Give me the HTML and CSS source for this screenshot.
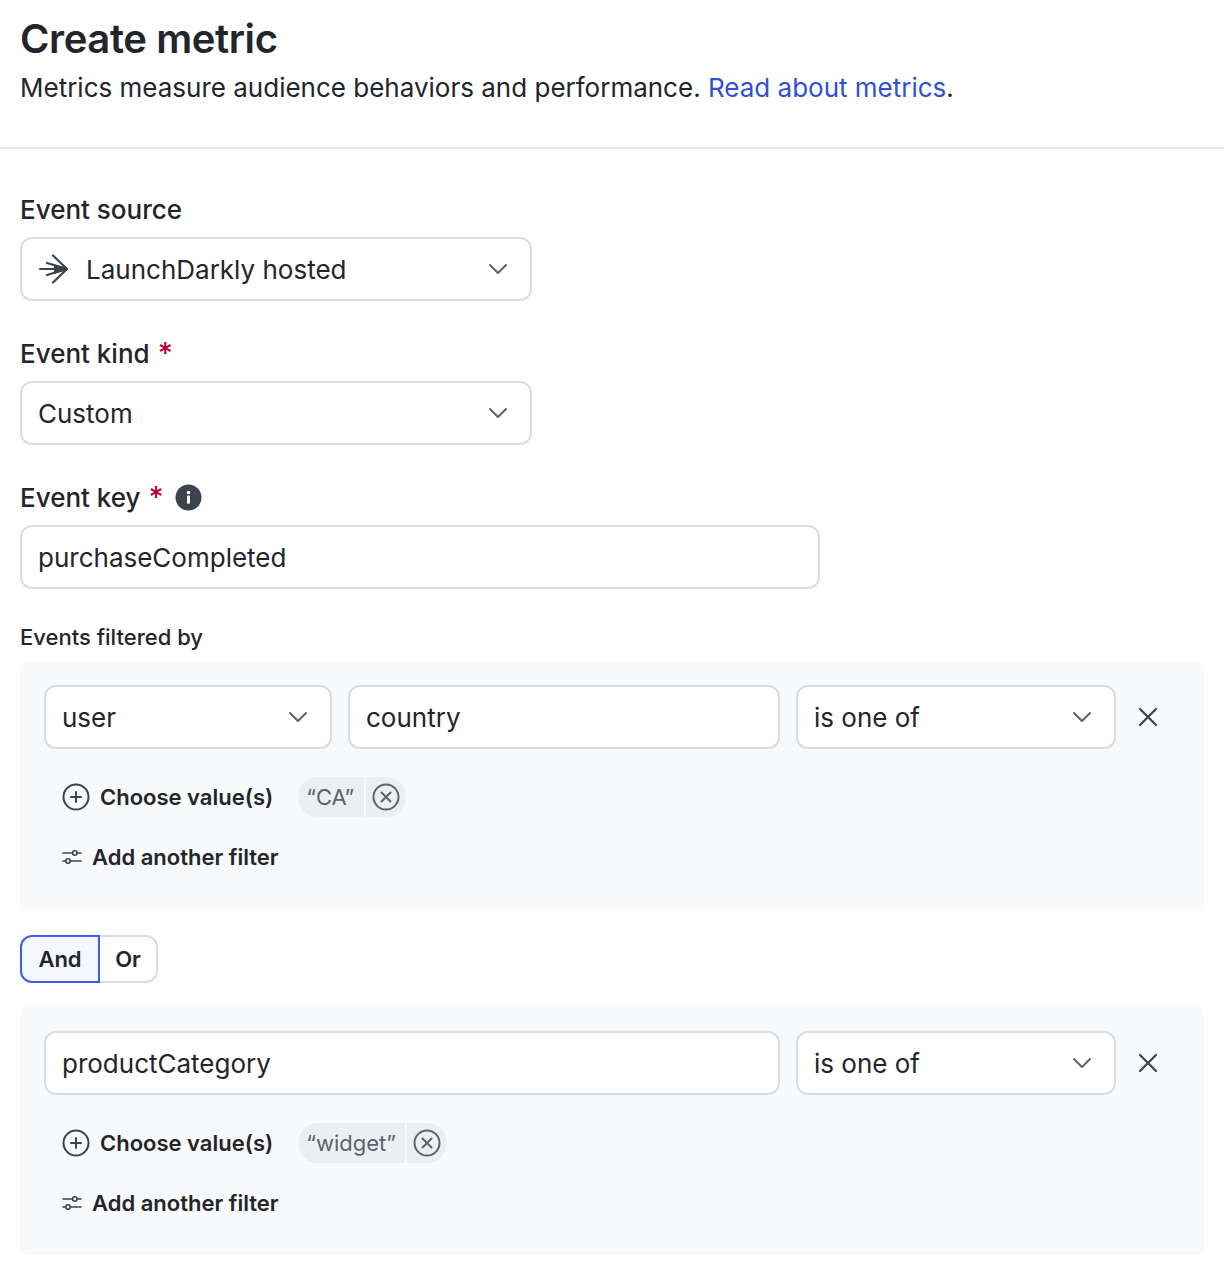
FILE: index.html
```html
<!DOCTYPE html>
<html lang="en">
<head>
  <meta charset="UTF-8" />
  <title>Create metric</title>
  <link rel="stylesheet" href="styles.css">
</head>
<body>

<header class="page-header">
  <h1>Create metric</h1>
  <p>Metrics measure audience behaviors and performance. <a href="#">Read about metrics</a>.</p>
</header>

<main class="form">
  <div class="field">
    <label>Event source</label>
    <div class="control w-select">
      <svg class="source-icon" viewBox="0 0 32 32" width="32" height="32" fill="none" stroke="#3c434c" stroke-width="2.200" stroke-linecap="round" stroke-linejoin="round">
        <path d="M2 16h27" />
        <path d="M15 2.500L29 16 15 29.500" />
        <path d="M9 10l20 6-20 6" />
        <path d="M17 12.500L29 16 17 19.500z" fill="#3c434c" />
      </svg>
      <span class="grow">LaunchDarkly hosted</span>
      <svg class="chevron" viewBox="0 0 20 12" width="20" height="12"><path d="M2 2l8 8 8-8" /></svg>
    </div>
  </div>

  <div class="field">
    <label>Event kind <span class="req">*</span></label>
    <div class="control w-select">
      <span class="grow">Custom</span>
      <svg class="chevron" viewBox="0 0 20 12" width="20" height="12"><path d="M2 2l8 8 8-8" /></svg>
    </div>
  </div>

  <div class="field last">
    <label>Event key <span class="req">*</span>
      <svg class="info" viewBox="0 0 28 28" width="27" height="27">
        <circle cx="14" cy="14" r="13.500" fill="#3c434c" />
        <circle cx="14" cy="8.800" r="1.800" fill="#fff" />
        <rect x="12.500" y="12" width="3" height="8.500" rx="0.800" fill="#fff" />
      </svg>
    </label>
    <div class="control w-input"><span class="grow">purchaseCompleted</span></div>
  </div>

  <div class="filters-label">Events filtered by</div>

  <!-- first filter -->
  <section class="panel">
    <div class="row">
      <div class="control ctx">
        <span class="grow">user</span>
        <svg class="chevron" viewBox="0 0 20 12" width="20" height="12"><path d="M2 2l8 8 8-8" /></svg>
      </div>
      <div class="control attr"><span class="grow">country</span></div>
      <div class="control op">
        <span class="grow">is one of</span>
        <svg class="chevron" viewBox="0 0 20 12" width="20" height="12"><path d="M2 2l8 8 8-8" /></svg>
      </div>
      <svg class="close" viewBox="0 0 20 20" width="20" height="20"><path d="M2 2l16 16M18 2L2 18" /></svg>
    </div>
    <div class="values">
      <button class="link choose">
        <svg viewBox="0 0 28 28" width="28" height="28" fill="none" stroke="#3c434c" stroke-width="2" stroke-linecap="round"><circle cx="14" cy="14" r="12.500" /><path d="M14 9v10M9 14h10" /></svg>
        Choose value(s)
      </button>
      <div class="chip">
        <span class="chip-text">“CA”</span>
        <span class="chip-x">
          <svg viewBox="0 0 28 28" width="28" height="28" fill="none" stroke="#5b636d" stroke-width="2" stroke-linecap="round"><circle cx="14" cy="14" r="12.500" /><path d="M9.500 9.500l9 9M18.500 9.500l-9 9" /></svg>
        </span>
      </div>
    </div>
    <button class="link add">
      <svg viewBox="0 0 20 16" width="20" height="16" fill="none" stroke="#3c434c" stroke-width="1.600" stroke-linecap="round"><path d="M1 4h9M15.500 4H19M1 12h2.500M8.500 12H19" /><circle cx="12.800" cy="4" r="2.200" /><circle cx="6" cy="12" r="2.200" /></svg>
      Add another filter
    </button>
  </section>

  <div class="toggle">
    <span class="toggle-item on">And</span>
    <span class="toggle-item">Or</span>
  </div>

  <!-- second filter -->
  <section class="panel">
    <div class="row">
      <div class="control wide"><span class="grow">productCategory</span></div>
      <div class="control op">
        <span class="grow">is one of</span>
        <svg class="chevron" viewBox="0 0 20 12" width="20" height="12"><path d="M2 2l8 8 8-8" /></svg>
      </div>
      <svg class="close" viewBox="0 0 20 20" width="20" height="20"><path d="M2 2l16 16M18 2L2 18" /></svg>
    </div>
    <div class="values">
      <button class="link choose">
        <svg viewBox="0 0 28 28" width="28" height="28" fill="none" stroke="#3c434c" stroke-width="2" stroke-linecap="round"><circle cx="14" cy="14" r="12.500" /><path d="M14 9v10M9 14h10" /></svg>
        Choose value(s)
      </button>
      <div class="chip">
        <span class="chip-text">“widget”</span>
        <span class="chip-x">
          <svg viewBox="0 0 28 28" width="28" height="28" fill="none" stroke="#5b636d" stroke-width="2" stroke-linecap="round"><circle cx="14" cy="14" r="12.500" /><path d="M9.500 9.500l9 9M18.500 9.500l-9 9" /></svg>
        </span>
      </div>
    </div>
    <button class="link add">
      <svg viewBox="0 0 20 16" width="20" height="16" fill="none" stroke="#3c434c" stroke-width="1.600" stroke-linecap="round"><path d="M1 4h9M15.500 4H19M1 12h2.500M8.500 12H19" /><circle cx="12.800" cy="4" r="2.200" /><circle cx="6" cy="12" r="2.200" /></svg>
      Add another filter
    </button>
  </section>
</main>

</body>
</html>
```

FILE: styles.css
```css
body {
  margin: 0;
  font-family: Inter, "Liberation Sans", sans-serif;
  background: #fff;
  color: #23252a;
}

.page-header {
  height: 149px;
  box-sizing: border-box;
  padding: 0 20px;
  border-bottom: 2px solid #e8eaee;
}
.page-header h1 {
  margin: 0;
  padding-top: 15px;
  font-size: 40px;
  line-height: 48px;
  font-weight: 600;
  letter-spacing: -0.4px;
}
.page-header p {
  margin: 5px 0 0;
  font-size: 26px;
  line-height: 40px;
}
.page-header a {
  color: #2f4fdb;
  text-decoration: none;
}

.form {
  padding: 45px 20px 0;
}
.field {
  margin-bottom: 37px;
}
.field.last {
  margin-bottom: 35px;
}
.field label {
  display: flex;
  align-items: center;
  height: 30px;
  margin-bottom: 13px;
  font-size: 26px;
  font-weight: 500;
  gap: 8px;
}
.req {
  color: #b5003c;
  font-size: 29px;
  margin-top: -1px;
}
.info {
  margin-left: 3px;
}

.control {
  display: flex;
  align-items: center;
  height: 64px;
  box-sizing: border-box;
  padding: 0 16px;
  background: #fff;
  border: 2px solid #d8dce3;
  border-radius: 12px;
  font-size: 26px;
}
.grow {
  flex: 1;
}
.w-select { width: 512px; }
.w-input { width: 800px; }
.ctx { width: 288px; }
.attr { width: 432px; }
.wide { width: 736px; }
.op { width: 320px; }

.source-icon {
  margin-right: 16px;
}
.chevron {
  fill: none;
  stroke: #5b636d;
  stroke-width: 2;
  stroke-linecap: round;
  stroke-linejoin: round;
  margin-right: 6px;
}

.filters-label {
  height: 26px;
  margin-bottom: 11px;
  font-size: 22px;
  line-height: 26px;
  font-weight: 500;
}

.panel {
  height: 248px;
  box-sizing: border-box;
  padding: 24px;
  background: #f7f9fb;
  border-radius: 8px;
}
.row {
  display: flex;
  align-items: center;
  gap: 16px;
}
.close {
  fill: none;
  stroke: #3c434c;
  stroke-width: 2.200;
  stroke-linecap: round;
  margin-left: 6px;
}

.values {
  display: flex;
  align-items: center;
  height: 40px;
  margin-top: 28px;
  padding-left: 18px;
}
.link {
  display: flex;
  align-items: center;
  padding: 0;
  border: none;
  background: none;
  font-family: inherit;
  font-size: 22px;
  font-weight: 600;
  color: #23252a;
}
.choose {
  gap: 10px;
  margin-right: 25px;
}
.add {
  gap: 10px;
  margin-top: 24px;
  margin-left: 18px;
  height: 32px;
}

.chip {
  display: flex;
  height: 40px;
  gap: 2px;
  font-size: 22px;
  color: #5b636d;
}
.chip-text {
  display: flex;
  align-items: center;
  min-width: 49px;
  padding: 0 9px 0 8px;
  background: #eceff2;
  border-radius: 20px 0 0 20px;
}
.chip-x {
  display: flex;
  align-items: center;
  padding: 0 6px;
  background: #eceff2;
  border-radius: 0 20px 20px 0;
}

.toggle {
  display: flex;
  width: 138px;
  height: 48px;
  margin: 26px 0 24px;
  font-size: 22px;
  font-weight: 600;
}
.toggle-item {
  display: flex;
  align-items: center;
  justify-content: center;
  flex: 1;
  box-sizing: border-box;
  border: 2px solid #d8dce3;
  border-left: none;
  border-radius: 0 12px 12px 0;
}
.toggle-item.on {
  flex: none;
  width: 80px;
  background: #f5f7ff;
  border: 2px solid #405bf0;
  border-radius: 12px 0 0 12px;
}
```
